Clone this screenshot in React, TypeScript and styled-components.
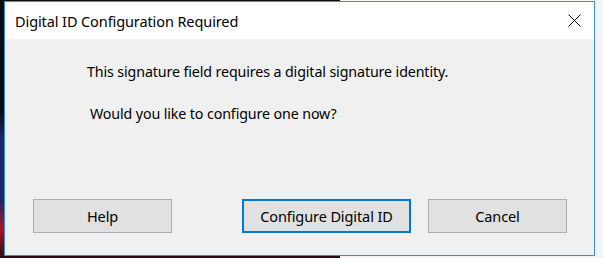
import styled, { createGlobalStyle } from "styled-components"

const GlobalStyle = createGlobalStyle`
  html, body {
    margin: 0;
    padding: 0;
  }
  body {
    font-family: "Segoe UI", "Noto Sans", "Open Sans", sans-serif;
    background: #f4f4f4;
  }
`

const Desktop = styled.div`
  width: 603px;
  height: 258px;
  box-sizing: border-box;
  padding: 1px 0 0 4px;
  overflow: hidden;
  background:
    linear-gradient(to bottom, #0c0c16 0, #0c0c16 110px, #1b2668 140px, #1b2668 200px, #b0141e 230px, #2a0a0e 258px) left / 340px 100% no-repeat,
    #f4f4f4;
`

const Dialog = styled.div`
  width: 591px;
  height: 255px;
  box-sizing: border-box;
  border: 1px solid #3b8fd5;
  background: #f0f0f0;
  display: flex;
  flex-direction: column;
`

const TitleBar = styled.div`
  height: 37px;
  background: #ffffff;
  display: flex;
  align-items: center;
  justify-content: space-between;
  padding: 0 13px 0 10px;
`

const Title = styled.span`
  font-size: 14.5px;
  letter-spacing: -0.1px;
  color: #000;
`

const CloseIcon = styled.svg`
  width: 13px;
  height: 13px;
`

const Body = styled.div`
  flex: 1;
  display: flex;
  flex-direction: column;
  padding: 23px 0 0 82px;
`

const Message = styled.p<{ $indent?: number }>`
  margin: 0 0 22px ${p => p.$indent ?? 0}px;
  font-size: 14.25px;
  letter-spacing: -0.12px;
  line-height: 20px;
  color: #000;
`

const ButtonRow = styled.div`
  display: flex;
  padding: 0 0 22px 28px;
`

const Button = styled.button<{ $width: number; $gap: number; $primary?: boolean }>`
  width: ${p => p.$width}px;
  height: 34px;
  margin-right: ${p => p.$gap}px;
  box-sizing: border-box;
  background: #e1e1e1;
  border: ${p => (p.$primary ? "2px solid #0078d7" : "1px solid #adadad")};
  font-family: inherit;
  font-size: 14.5px;
  letter-spacing: -0.1px;
  color: #000;
  padding: 0;
`

const Spacer = styled.div`
  flex: 1;
`

export default function App() {
  return (
    <>
      <GlobalStyle />
      <Desktop>
        <Dialog>
          <TitleBar>
            <Title>Digital ID Configuration Required</Title>
            <CloseIcon viewBox="0 0 13 13">
              <path d="M0.5 0.5 L12.5 12.5 M12.5 0.5 L0.5 12.5" stroke="#000" strokeWidth="1" fill="none" />
            </CloseIcon>
          </TitleBar>
          <Body>
            <Message>This signature field requires a digital signature identity.</Message>
            <Message $indent={3}>Would you like to configure one now?</Message>
            <Spacer />
          </Body>
          <ButtonRow>
            <Button $width={139} $gap={70}>Help</Button>
            <Button $width={169} $gap={17} $primary>Configure Digital ID</Button>
            <Button $width={139} $gap={0}>Cancel</Button>
          </ButtonRow>
        </Dialog>
      </Desktop>
    </>
  )
}
